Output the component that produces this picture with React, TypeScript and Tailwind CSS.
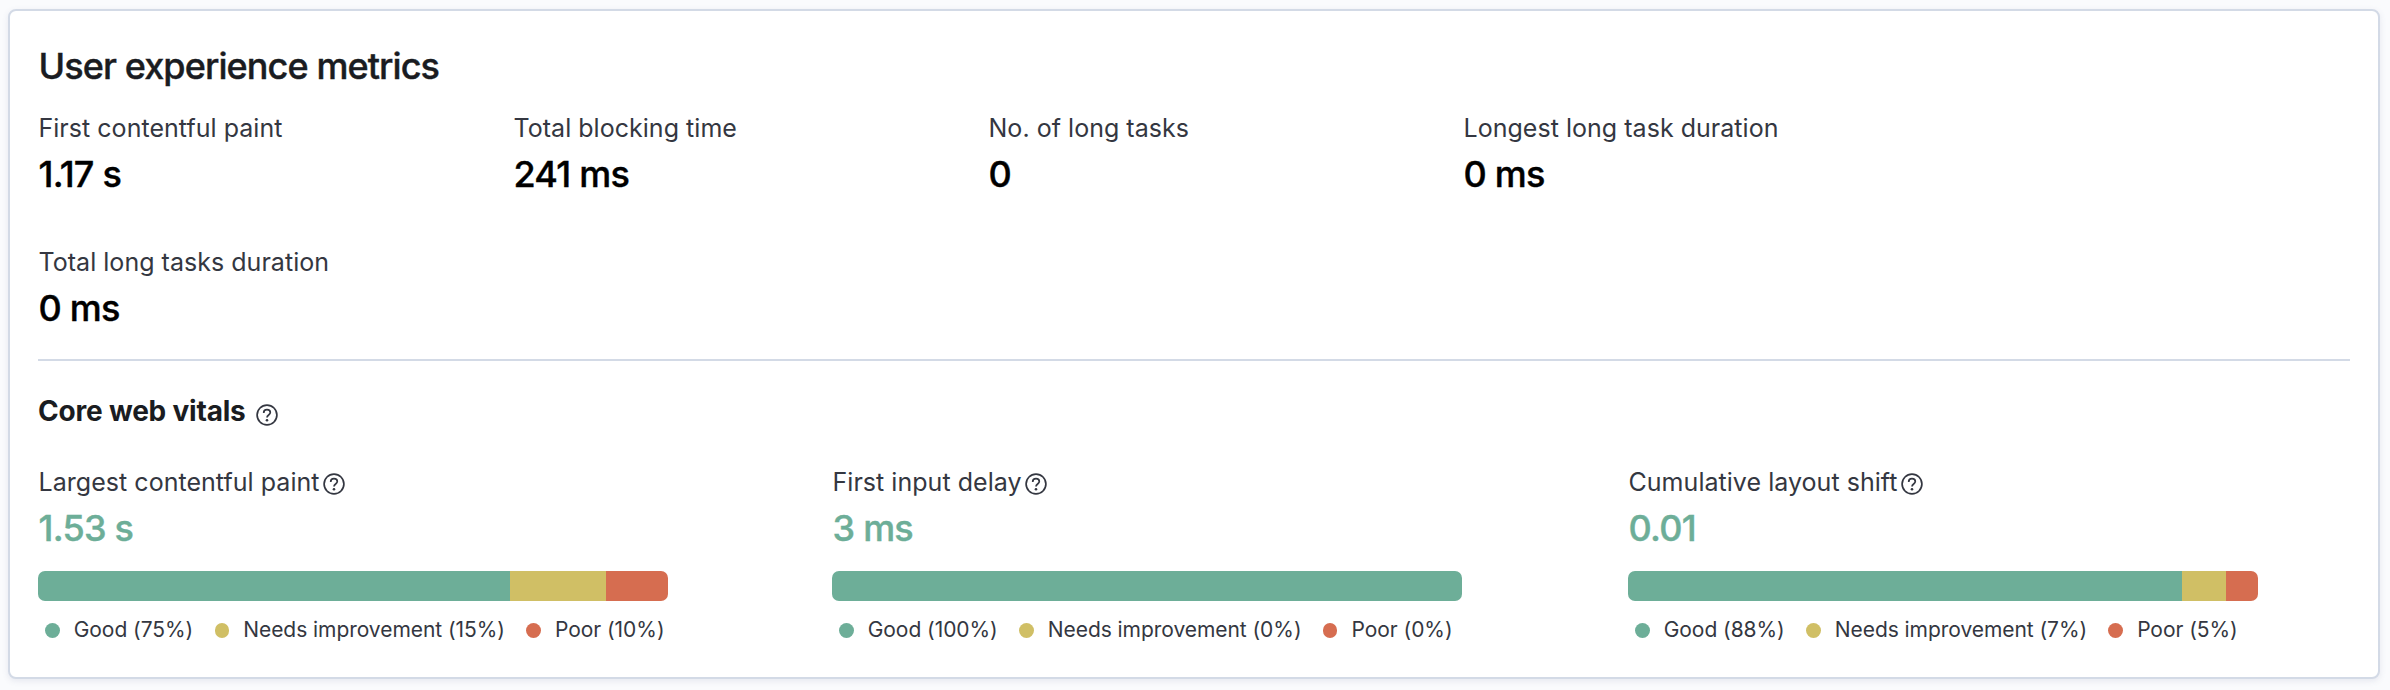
type Vital = { label: string; value: string; widths: [number, number, number]; ranks: [number, number, number] };

const METRICS = [
  { label: "First contentful paint", value: "1.17 s" },
  { label: "Total blocking time", value: "241 ms" },
  { label: "No. of long tasks", value: "0" },
  { label: "Longest long task duration", value: "0 ms" },
  { label: "Total long tasks duration", value: "0 ms" },
];

const VITALS: Vital[] = [
  { label: "Largest contentful paint", value: "1.53 s", widths: [472, 96, 62], ranks: [75, 15, 10] },
  { label: "First input delay", value: "3 ms", widths: [630, 0, 0], ranks: [100, 0, 0] },
  { label: "Cumulative layout shift", value: "0.01", widths: [554, 44, 32], ranks: [88, 7, 5] },
];

const LEGEND = [
  { name: "Good", color: "bg-[#6dae98]" },
  { name: "Needs improvement", color: "bg-[#d0bf65]" },
  { name: "Poor", color: "bg-[#d66d50]" },
];

function HelpIcon({ className }: { className: string }) {
  return (
    <svg viewBox="0 0 24 24" className={className} fill="none" stroke="currentColor" strokeWidth="1.7">
      <circle cx="12" cy="12" r="9.9" />
      <path d="M8.7 9.9c0-2 1.4-3.2 3.3-3.2s3.3 1.2 3.3 2.9c0 2.4-3.3 2.5-3.3 4.9" />
      <circle cx="12" cy="17.2" r="1.3" fill="currentColor" stroke="none" />
    </svg>
  );
}

function VitalPanel({ vital }: { vital: Vital }) {
  return (
    <div>
      <div className="flex h-9 items-center gap-0.5 pl-[0.5px]">
        <span className="text-[25px] leading-9 tracking-[0.04px]">{vital.label}</span>
        <HelpIcon className="mt-1 size-6" />
      </div>
      <div className="mt-1.5 pl-[0.5px] text-[36px] leading-11 font-medium tracking-[-0.021em] text-[#6dae98] [-webkit-text-stroke:0.4px]">{vital.value}</div>
      <div className="mt-[21px] flex h-[30px] w-[630px] overflow-hidden rounded-[7px]">
        {LEGEND.map((l, i) => (
          <div key={l.name} className={l.color} style={{ width: vital.widths[i] }} />
        ))}
      </div>
      <div className="mt-[13px] flex h-8 items-center gap-[21.3px] pl-[7px]">
        {LEGEND.map((l, i) => (
          <div key={l.name} className="flex items-center gap-[14.2px] text-[21px] leading-8 tracking-[-0.05px] whitespace-nowrap">
            <span className={`mt-px size-[14.5px] rounded-full ${l.color}`} />
            <span>{`${l.name} (${vital.ranks[i]}%)`}</span>
          </div>
        ))}
      </div>
    </div>
  );
}

export default function App() {
  return (
    <div className="h-[690px] w-[2390px] bg-[#fafbfd] pt-[9px] pr-[10px] pl-2 font-[Inter,sans-serif] text-[#343741]">
      <section className="h-[670px] rounded-lg border-2 border-[#d3dae6] bg-white px-7 pt-[33px] shadow-[0_2px_6px_rgba(80,90,140,0.12)]">
        <h2 className="pl-[0.5px] text-[36px] leading-11 font-medium tracking-[-0.025em] text-[#1a1c21] [-webkit-text-stroke:0.4px]">User experience metrics</h2>
        <div className="mt-[22px] grid grid-cols-[repeat(4,475px)] gap-y-12 pl-[0.5px]">
          {METRICS.map((m) => (
            <div key={m.label}>
              <div className="text-[25px] leading-9 tracking-[0.03px]">{m.label}</div>
              <div className="mt-1.5 text-[36px] leading-11 font-medium tracking-[-0.021em] text-black [-webkit-text-stroke:0.4px]">{m.value}</div>
            </div>
          ))}
        </div>
        <hr className="mt-[29px] border-t-2 border-[#d3dae6]" />
        <div className="mt-[30px] flex h-10 items-center gap-[9px]">
          <h3 className="text-[28px] leading-10 font-bold tracking-[-0.2px] text-[#1a1c21]">Core web vitals</h3>
          <HelpIcon className="mt-2 size-6" />
        </div>
        <div className="mt-[33px] grid grid-cols-[794px_796px_630px]">
          {VITALS.map((v) => (
            <VitalPanel key={v.label} vital={v} />
          ))}
        </div>
      </section>
    </div>
  );
}
